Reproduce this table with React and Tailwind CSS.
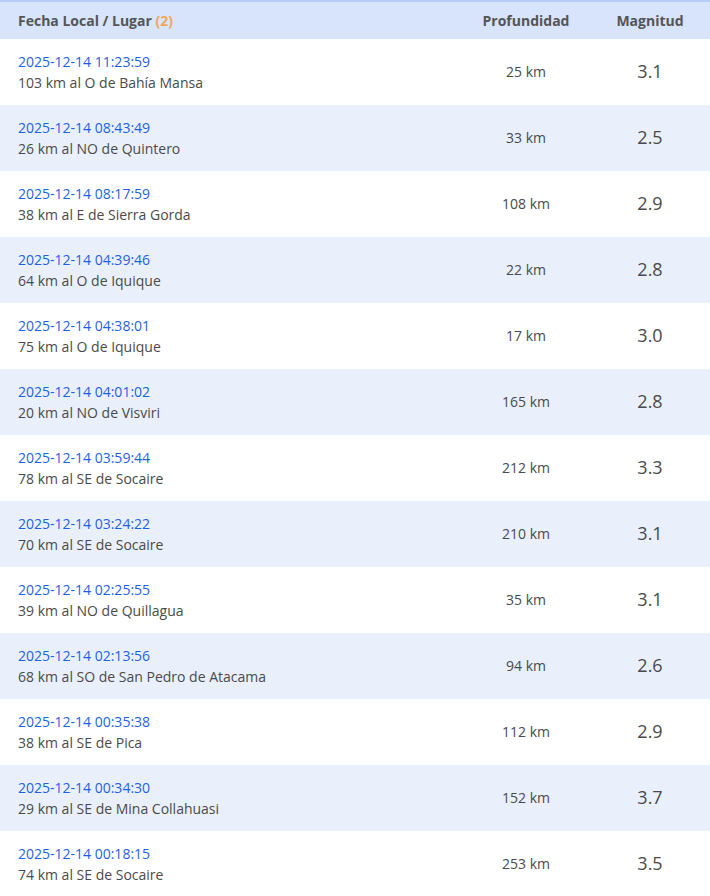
import React from 'react';

const sismos = [
  { fecha: '2025-12-14 11:23:59', lugar: '103 km al O de Bahía Mansa', prof: '25 km', mag: '3.1' },
  { fecha: '2025-12-14 08:43:49', lugar: '26 km al NO de Quintero', prof: '33 km', mag: '2.5' },
  { fecha: '2025-12-14 08:17:59', lugar: '38 km al E de Sierra Gorda', prof: '108 km', mag: '2.9' },
  { fecha: '2025-12-14 04:39:46', lugar: '64 km al O de Iquique', prof: '22 km', mag: '2.8' },
  { fecha: '2025-12-14 04:38:01', lugar: '75 km al O de Iquique', prof: '17 km', mag: '3.0' },
  { fecha: '2025-12-14 04:01:02', lugar: '20 km al NO de Visviri', prof: '165 km', mag: '2.8' },
  { fecha: '2025-12-14 03:59:44', lugar: '78 km al SE de Socaire', prof: '212 km', mag: '3.3' },
  { fecha: '2025-12-14 03:24:22', lugar: '70 km al SE de Socaire', prof: '210 km', mag: '3.1' },
  { fecha: '2025-12-14 02:25:55', lugar: '39 km al NO de Quillagua', prof: '35 km', mag: '3.1' },
  { fecha: '2025-12-14 02:13:56', lugar: '68 km al SO de San Pedro de Atacama', prof: '94 km', mag: '2.6' },
  { fecha: '2025-12-14 00:35:38', lugar: '38 km al SE de Pica', prof: '112 km', mag: '2.9' },
  { fecha: '2025-12-14 00:34:30', lugar: '29 km al SE de Mina Collahuasi', prof: '152 km', mag: '3.7' },
  { fecha: '2025-12-14 00:18:15', lugar: '74 km al SE de Socaire', prof: '253 km', mag: '3.5' },
];

const App = () => {
  return (
    <div className="min-h-screen bg-white font-['Open_Sans',sans-serif] text-[#4a4a4a]">
      {/* Encabezado */}
      <div className="grid grid-cols-[1fr_128px_120px] items-center h-[39px] border-t-2 border-[#b4cbf6] bg-[#d7e4fb] text-sm font-bold text-[#555]">
        <div className="pl-[18px]">
          Fecha Local / Lugar <span className="text-[#f2a65a]">(2)</span>
        </div>
        <div className="text-center">Profundidad</div>
        <div className="text-center">Magnitud</div>
      </div>

      {/* Filas */}
      {sismos.map((s, i) => (
        <div
          key={s.fecha}
          className={
            'grid grid-cols-[1fr_128px_120px] items-center h-[66px] ' +
            (i % 2 === 1 ? 'bg-[#e9f0fc]' : 'bg-white')
          }
        >
          <div className="pl-[18px] text-sm leading-[21px]">
            <div className="text-[#1f5fe6]">{s.fecha}</div>
            <div className="text-[#4a4a4a]">{s.lugar}</div>
          </div>
          <div className="text-center text-sm">{s.prof}</div>
          <div className="text-center text-lg leading-6 pb-[2px]">{s.mag}</div>
        </div>
      ))}
    </div>
  );
};

export default App;
